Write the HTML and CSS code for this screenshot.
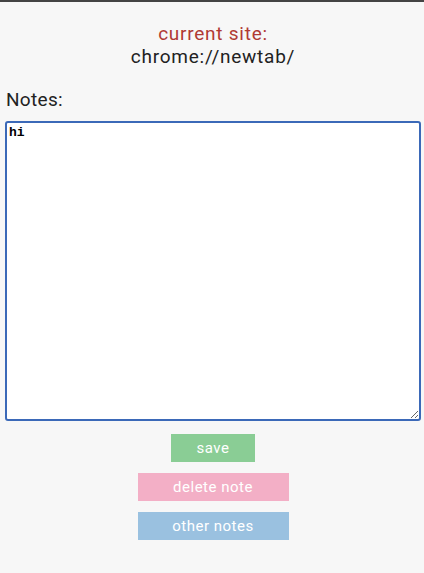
FILE: index.html
```html
<!DOCTYPE html>
<html lang="en">
<head>
    <meta charset="UTF-8">
    <meta name="viewport" content="width=device-width, initial-scale=1.0">
    <title>Notes</title>
    <link rel="stylesheet" href="styles.css">
</head>
<body>
    <div class="site">
        <div class="site-label">current site:</div>
        <div class="site-url">chrome://newtab/</div>
    </div>

    <label class="notes-label" for="note">Notes:</label>
    <textarea id="note" class="note">hi</textarea>

    <div class="actions">
        <button class="btn btn-save">save</button>
        <button class="btn btn-delete">delete note</button>
        <button class="btn btn-other">other notes</button>
    </div>
</body>
</html>
```

FILE: styles.css
```css
html {
    background: #f7f7f7;
}
body {
    margin: 0;
    padding: 0 3px 0 5px;
    border-top: 2px solid #444;
    font-family: Roboto, sans-serif;
    color: #222;
}
.site {
    text-align: center;
    padding-top: 20px;
    letter-spacing: 0.75px;
}
.site-label {
    color: #b03a34;
    font-size: 19px;
    line-height: 23px;
}
.site-url {
    font-size: 19px;
    line-height: 23px;
}
.notes-label {
    display: block;
    font-size: 19px;
    line-height: 24px;
    letter-spacing: 0.3px;
    margin-top: 20px;
    margin-bottom: 9px;
    padding-left: 1px;
}
.note {
    display: block;
    box-sizing: border-box;
    width: 100%;
    height: 300px;
    margin: 0;
    padding: 2px;
    border: 2px solid #3b69b8;
    border-radius: 3px;
    background: #fff;
    font-family: "Liberation Mono", monospace;
    font-size: 13px;
    font-weight: bold;
    outline: none;
}
.actions {
    display: flex;
    flex-direction: column;
    align-items: center;
    gap: 11px;
    margin-top: 13px;
}
.btn {
    border: none;
    color: #fff;
    font-family: Roboto, sans-serif;
    font-size: 15px;
    letter-spacing: 0.5px;
    height: 28px;
    padding: 0;
}
.btn-save {
    width: 84px;
    background: #8acd95;
}
.btn-delete {
    width: 151px;
    background: #f3afc6;
}
.btn-other {
    width: 151px;
    background: #9ac1e0;
}
```
